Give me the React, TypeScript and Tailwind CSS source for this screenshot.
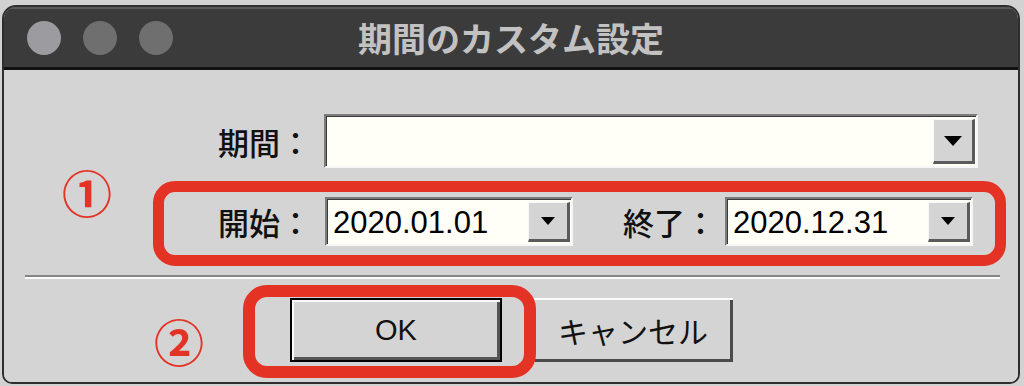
import React from "react";

const jp = { fontFamily: '"Noto Sans CJK JP", "Noto Sans", sans-serif' };
const latin = { fontFamily: '"Liberation Sans", Arial, sans-serif' };

interface IComboProps {
  value?: string;
  width: string;
  height: string;
  small?: boolean;
}

const ComboBox = ({ value, width, height, small }: IComboProps) => {
  return (
    <div
      className={`${width} ${height} flex border-t-2 border-l-2 border-t-[#7c7c7c] border-l-[#7c7c7c] border-b-2 border-r-2 border-b-[#f6f6f6] border-r-[#f6f6f6]`}
    >
      <div className="flex flex-1 border-t border-l border-t-[#3a3a3a] border-l-[#3a3a3a] bg-[#fffff8]">
        <div
          className="flex flex-1 items-center pl-[5px] text-[31px] leading-none text-black"
          style={latin}
        >
          {value}
        </div>
        <div className="my-[2px] mr-[1px] flex w-[42px] items-center justify-center border-t border-l border-t-[#f8f8f8] border-l-[#f8f8f8] border-b-[3px] border-r-[3px] border-b-[#5a5a5a] border-r-[#5a5a5a] bg-[#d4d4d4]">
          {small ? (
            <svg width="14" height="8" viewBox="0 0 14 8">
              <path d="M0 0h14L7 8z" fill="#000" />
            </svg>
          ) : (
            <svg width="18" height="10" viewBox="0 0 18 10">
              <path d="M0 0h18L9 10z" fill="#000" />
            </svg>
          )}
        </div>
      </div>
    </div>
  );
};

const Label = ({ text, className }: { text: string; className: string }) => (
  <div
    className={`${className} text-[31px] font-medium leading-none text-[#111]`}
    style={jp}
  >
    {text}
  </div>
);

const CircledNumber = ({ text, className }: { text: string; className: string }) => (
  <div
    className={`absolute flex h-[60px] w-[60px] items-center justify-center text-[50px] font-bold leading-none text-[#e43224] ${className}`}
    style={jp}
  >
    {text}
  </div>
);

const App = () => {
  return (
    <div className="h-[386px] w-[1024px] bg-[#d2d2d2] pt-[5px] pl-[2px]">
      <div className="flex h-[379px] w-[1018px] flex-col overflow-hidden rounded-t-[14px] rounded-b-[10px] border-2 border-[#2e2e2e]">
        <div className="grid h-[60px] grid-cols-[1fr_auto_1fr] items-center bg-[#3b3b3b] shadow-[inset_0_2px_0_#5a5a5a]">
          <div className="flex items-center gap-[22px] pl-[23px] pt-[2px]">
            <span className="h-[34px] w-[34px] rounded-full bg-[#9c9ca0]" />
            <span className="h-[34px] w-[34px] rounded-full bg-[#6f6f6f]" />
            <span className="h-[34px] w-[34px] rounded-full bg-[#6f6f6f]" />
          </div>
          <div
            className="pt-[2px] text-[34px] font-semibold leading-none text-[#c2c2c2]"
            style={jp}
          >
            期間のカスタム設定
          </div>
          <div />
        </div>
        <div className="h-[3px] bg-[#111]" />

        <div className="relative flex-1 bg-[#d4d4d4]">
          <div className="mt-[44px] flex items-center">
            <Label text="期間：" className="w-[307px] text-right" />
            <div className="ml-[13px]">
              <ComboBox width="w-[654px]" height="h-[54px]" />
            </div>
          </div>

          <div className="mt-[29px] flex items-center">
            <Label text="開始：" className="w-[307px] text-right" />
            <div className="ml-[14px]">
              <ComboBox value="2020.01.01" width="w-[248px]" height="h-[49px]" small />
            </div>
            <Label text="終了：" className="ml-[50px]" />
            <div className="ml-[9px]">
              <ComboBox value="2020.12.31" width="w-[248px]" height="h-[49px]" small />
            </div>
          </div>

          <div className="ml-[21px] mt-[29px] w-[975px]">
            <div className="h-[2px] bg-[#858585]" />
            <div className="h-[2px] bg-[#fbfbfb]" />
          </div>

          <div className="mt-[19px] flex">
            <button
              className="ml-[286px] flex h-[64px] w-[212px] items-center justify-center border-2 border-black bg-[#d4d4d4] shadow-[inset_2px_2px_0_#fafafa,inset_-3px_-3px_0_#555]"
              style={latin}
            >
              <span className="text-[29px] leading-none text-[#111]">OK</span>
            </button>
            <button
              className="ml-[31px] flex h-[64px] w-[200px] items-center justify-center bg-[#d4d4d4] shadow-[inset_2px_2px_0_#fafafa,inset_-3px_-3px_0_#4a4a4a]"
              style={jp}
            >
              <span className="text-[30px] leading-none text-[#111]">キャンセル</span>
            </button>
          </div>

          <div className="absolute left-[149px] top-[111px] h-[85px] w-[853px] rounded-[22px] border-[11px] border-[#e43224]" />
          <CircledNumber text="①" className="left-[53px] top-[91px]" />
          <div className="absolute left-[239px] top-[215px] h-[93px] w-[293px] rounded-[24px] border-[12px] border-[#e43224]" />
          <CircledNumber text="②" className="left-[145px] top-[240px]" />
        </div>
      </div>
    </div>
  );
};

export default App;
